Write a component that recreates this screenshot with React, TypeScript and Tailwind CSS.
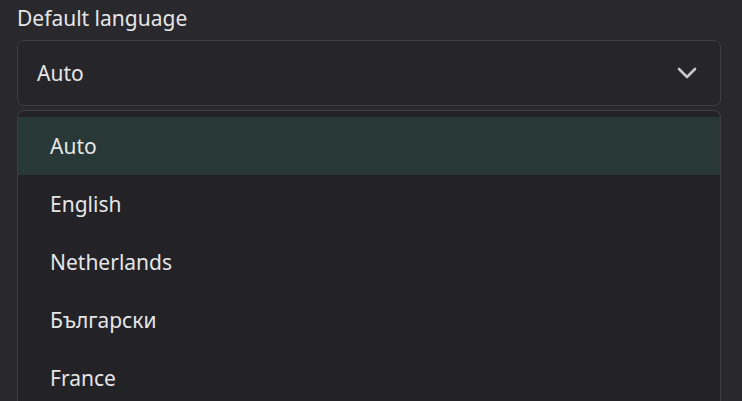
import React from "react";

const options = ["Auto", "English", "Netherlands", "Български", "France"];

export default function App() {
  const selected = "Auto";
  return (
    <div className="w-[742px] h-[401px] overflow-hidden bg-[#29282d] font-['Noto_Sans',sans-serif] text-[#e6e6e8]">
      <div className="pl-[17px] pr-[21px] pt-[4px]">
        <label className="block text-[21px] leading-[29px]">Default language</label>

        <div className="mt-[7px] h-[66px] flex items-center justify-between rounded-[7px] border border-[#3e3d43] bg-[#26252a] pl-[19px] pr-[23px]">
          <span className="text-[21px] pt-[2px]">{selected}</span>
          <svg width="20" height="12" viewBox="0 0 20 12" fill="none" className="text-[#c6c6ca]">
            <path d="M2 2 L10 10 L18 2" stroke="currentColor" strokeWidth="2.6" strokeLinecap="round" strokeLinejoin="round" />
          </svg>
        </div>

        <div className="mt-[4px] rounded-t-[7px] border border-b-0 border-[#3e3d43] bg-[#232227] pt-[6px] h-[400px]">
          {options.map((o) => (
            <div
              key={o}
              className={
                "h-[58px] flex items-center pl-[32px] pt-[2px] text-[21px] " +
                (o === selected ? "bg-[#283836]" : "")
              }
            >
              {o}
            </div>
          ))}
        </div>
      </div>
    </div>
  );
}
